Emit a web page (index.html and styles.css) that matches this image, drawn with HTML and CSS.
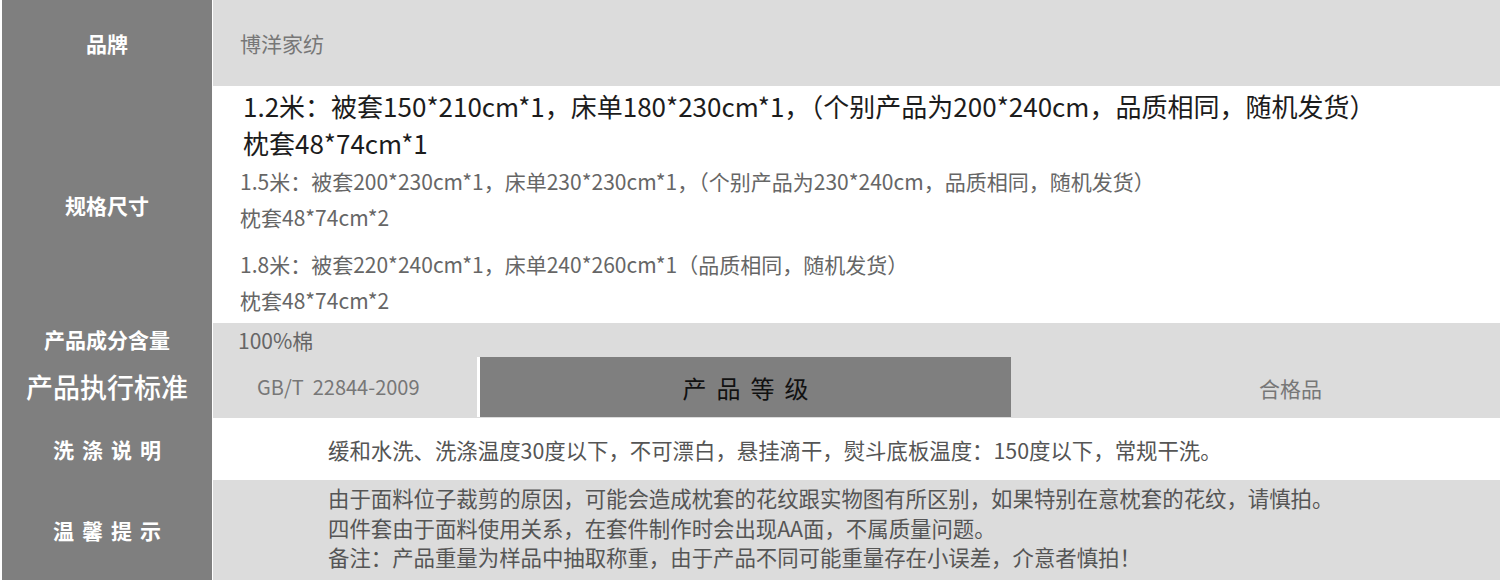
FILE: index.html
```html
<!DOCTYPE html>
<html lang="zh-CN">
<head>
<meta charset="utf-8">
<title>产品参数</title>
<link rel="stylesheet" href="styles.css">
</head>
<body>
<div class="sheet">
  <div class="row row-brand">
    <div class="label">品牌</div>
    <div class="cell cell-light cell-brand">博洋家纺</div>
  </div>
  <div class="row row-spec">
    <div class="label">规格尺寸</div>
    <div class="cell cell-spec">
      <div class="spec spec-main">
        <div>1.2米：被套150*210cm*1，床单180*230cm*1，（个别产品为200*240cm，品质相同，随机发货）</div>
        <div>枕套48*74cm*1</div>
      </div>
      <div class="spec spec-b">
        <div>1.5米：被套200*230cm*1，床单230*230cm*1，（个别产品为230*240cm，品质相同，随机发货）</div>
        <div>枕套48*74cm*2</div>
      </div>
      <div class="spec spec-c">
        <div>1.8米：被套220*240cm*1，床单240*260cm*1（品质相同，随机发货）</div>
        <div>枕套48*74cm*2</div>
      </div>
    </div>
  </div>
  <div class="row row-comp">
    <div class="label">产品成分含量</div>
    <div class="cell cell-light cell-comp">100%棉</div>
  </div>
  <div class="row row-std">
    <div class="label label-big">产品执行标准</div>
    <div class="cell cell-light cell-std">
      <div class="std-code">GB/T&nbsp;&nbsp;22844-2009</div>
      <div class="grade-head"><span>产品等级</span></div>
      <div class="grade-val">合格品</div>
    </div>
  </div>
  <div class="row row-wash">
    <div class="label label-spaced"><span>洗涤说明</span></div>
    <div class="cell cell-wash">缓和水洗、洗涤温度30度以下，不可漂白，悬挂滴干，熨斗底板温度：150度以下，常规干洗。</div>
  </div>
  <div class="row row-tips">
    <div class="label label-spaced"><span>温馨提示</span></div>
    <div class="cell cell-light cell-tips">
      <div>由于面料位子裁剪的原因，可能会造成枕套的花纹跟实物图有所区别，如果特别在意枕套的花纹，请慎拍。</div>
      <div>四件套由于面料使用关系，在套件制作时会出现AA面，不属质量问题。</div>
      <div>备注：产品重量为样品中抽取称重，由于产品不同可能重量存在小误差，介意者慎拍！</div>
    </div>
  </div>
</div>
</body>
</html>
```

FILE: styles.css
```css
* { box-sizing: border-box; }
html, body { margin: 0; padding: 0; background: #fff; }
body {
  font-family: "Noto Sans CJK SC", "Noto Sans", sans-serif;
  font-size: 21px;
  color: #666;
}
.sheet {
  width: 1500px;
  padding-left: 2px;
}
.row {
  display: flex;
}
.label {
  flex: none;
  width: 210px;
  background: #7f7f7f;
  color: #fff;
  font-weight: 700;
  font-size: 21px;
  display: flex;
  align-items: center;
  justify-content: center;
}
.label-big {
  font-size: 27px;
  font-weight: 500;
}
.label-spaced span {
  letter-spacing: 8px;
  padding-left: 8px;
}
.cell {
  flex: 1;
  margin-left: 1px;
  display: flex;
  align-items: center;
}
.cell-light { background: #dcdcdc; }

.row-brand { height: 86px; }
.cell-brand { padding-left: 27px; color: #777; }

.cell-spec {
  flex-direction: column;
  align-items: flex-start;
  padding: 1px 0 5px 27px;
}
.spec-main {
  font-size: 26px;
  line-height: 37px;
  color: #1c1c1c;
  padding-left: 3px;
}
.spec-b, .spec-c {
  line-height: 36px;
  color: #666;
}
.spec-b { margin-top: 2px; }
.spec-c { margin-top: 11px; }

.row-comp { height: 32px; }
.cell-comp { padding-left: 25px; padding-top: 2px; color: #666; }

.row-std { height: 63px; }
.cell-std { align-items: stretch; }
.std-code {
  width: 264px;
  flex: none;
  padding-left: 44px;
  display: flex;
  align-items: center;
  color: #777;
  font-size: 20px;
}
.grade-head {
  flex: none;
  width: 534px;
  margin: 2px 0 1px;
  background: #7f7f7f;
  border-left: 3px solid #fff;
  display: flex;
  align-items: center;
  justify-content: center;
  color: #111;
  font-size: 24px;
}
.grade-head span {
  letter-spacing: 10px;
  padding-left: 10px;
}
.grade-val {
  flex: 1;
  display: flex;
  align-items: center;
  padding-left: 248px;
  padding-top: 2px;
  color: #777;
}

.row-wash { height: 62px; }
.cell-wash { padding-left: 115px; color: #555; font-size: 21.4px; }

.row-tips { height: 100px; }
.cell-tips {
  flex-direction: column;
  align-items: flex-start;
  justify-content: flex-start;
  padding: 3px 0 0 115px;
  line-height: 29.5px;
  font-size: 21.4px;
  color: #555;
}
```
